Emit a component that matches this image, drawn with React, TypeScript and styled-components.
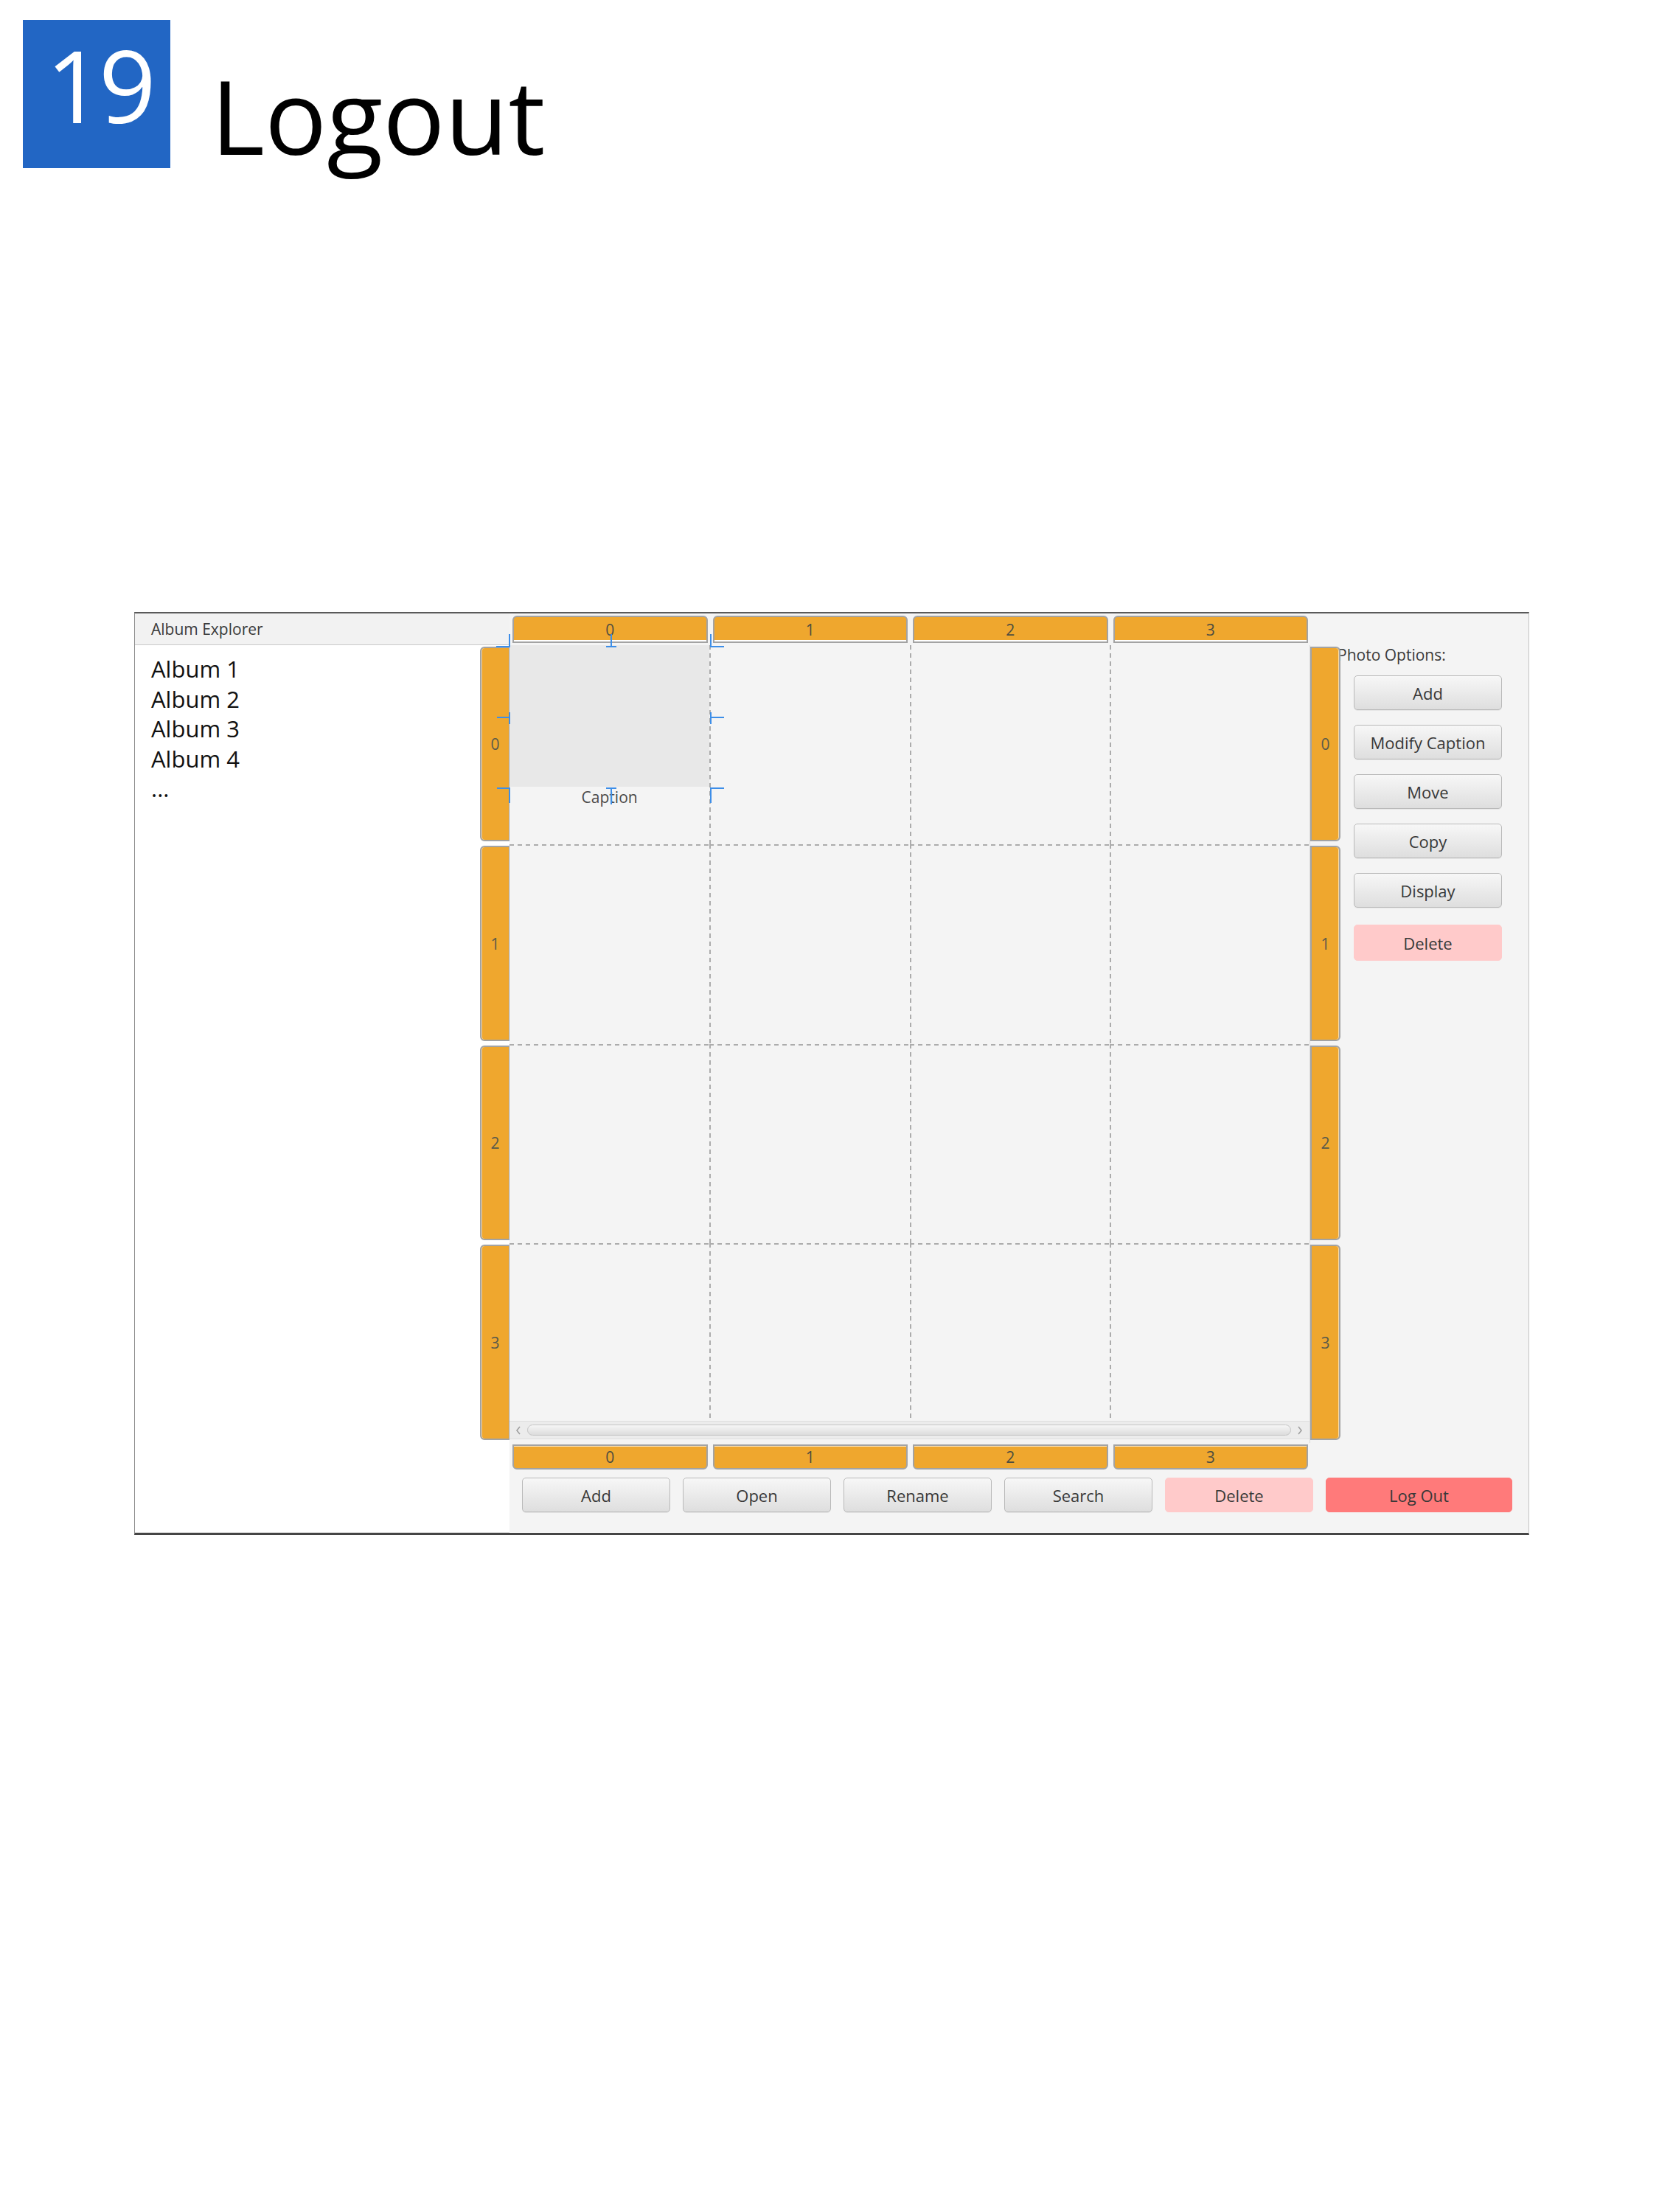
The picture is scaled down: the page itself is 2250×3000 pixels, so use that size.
import React from 'react';
import styled, { createGlobalStyle, css } from 'styled-components';

const GlobalStyle = createGlobalStyle`
  html, body {
    margin: 0;
    padding: 0;
    background: #ffffff;
  }
  body {
    font-family: 'Open Sans', 'Noto Sans', sans-serif;
    color: #000;
  }
  * {
    box-sizing: border-box;
  }
`;

const ORANGE = '#efa72e';
const HEADER_BORDER = '#a3a3a3';

const Page = styled.div`
  width: 2250px;
  height: 3000px;
  background: #fff;
`;

const Header = styled.header`
  display: flex;
  align-items: flex-start;
  padding: 27px 0 0 31px;
`;

const Badge = styled.div`
  width: 200px;
  height: 201px;
  background: #2266c4;
  color: #fff;
  display: flex;
  align-items: center;
  justify-content: center;
  padding: 0 0 26px 6px;
  font-size: 136px;
  line-height: 1;
  letter-spacing: -6px;
`;

const Title = styled.h1`
  margin: 59px 0 0 55px;
  font-size: 140px;
  font-weight: 400;
  line-height: 1;
  letter-spacing: 0;
`;

const Window = styled.div`
  position: relative;
  margin: 602px 0 0 182px;
  width: 1892px;
  height: 1252px;
  border-style: solid;
  border-color: #5a5a5a #c4c4c4 #454545 #8e8e8e;
  border-width: 2px 1px 3px 1px;
  background: #f4f4f4;
  display: grid;
  grid-template-columns: 468px 40px 1086px 41px 1fr;
  grid-template-rows: 43px 1082px 38px 1fr;
`;

const TitleBar = styled.div`
  grid-column: 1 / 3;
  grid-row: 1;
  display: flex;
  align-items: center;
  padding-left: 22px;
  background: #f2f2f2;
  border-bottom: 1px solid #cacaca;
  font-size: 21px;
  color: #3a3a3a;
`;

const ListPane = styled.ul`
  grid-column: 1 / 3;
  grid-row: 2 / 5;
  margin: 0;
  padding: 12px 0 0 22px;
  list-style: none;
  background: #fff;
  border-bottom: 1px solid #d4d4d4;
`;

const ListItem = styled.li`
  font-size: 31px;
  line-height: 40.5px;
  color: #111;
`;

const RowHeaderColumn = styled.div<{ $col: number }>`
  grid-row: 2;
  grid-column: ${({ $col }) => $col};
  z-index: 2;
  display: grid;
  grid-template-rows: 270px 271px 270px 1fr;
`;

const RowHeader = styled.div<{ $side: 'left' | 'right' }>`
  margin: 2px 0 4px;
  display: flex;
  align-items: center;
  justify-content: center;
  background: ${ORANGE};
  border: 2px solid ${HEADER_BORDER};
  font-size: 21px;
  color: #5a5a4a;
  ${({ $side }) =>
    $side === 'left'
      ? css`
          border-radius: 6px 0 0 6px;
          border-right-width: 1px;
          box-shadow: inset 1px 0 0 rgba(255, 255, 255, 0.5);
        `
      : css`
          border-radius: 0 6px 6px 0;
          box-shadow: inset -1px 0 0 rgba(255, 255, 255, 0.6);
        `}
`;

const ColHeaderRow = styled.div<{ $row: number }>`
  grid-row: ${({ $row }) => $row};
  grid-column: 3;
  display: grid;
  grid-template-columns: repeat(4, 1fr);
`;

const ColHeader = styled.div<{ $edge: 'top' | 'bottom' }>`
  display: flex;
  align-items: center;
  justify-content: center;
  background: ${ORANGE};
  border: 2px solid ${HEADER_BORDER};
  font-size: 21px;
  color: #4e4e40;
  ${({ $edge }) =>
    $edge === 'top'
      ? css`
          margin: 3px 3px 3px 4px;
          border-radius: 6px 6px 0 0;
          box-shadow: inset 0 -2px 0 #ffffff;
        `
      : css`
          margin: 2px 3px 2px 4px;
          border-radius: 0 0 6px 6px;
          box-shadow: inset 0 1px 0 rgba(255, 255, 255, 0.7);
        `}
`;

const CellsPane = styled.div`
  grid-row: 2;
  grid-column: 3;
  display: flex;
  flex-direction: column;
  border-right: 1px solid #dadada;
`;

const CellGrid = styled.div`
  flex: 1;
  display: grid;
  grid-template-columns: repeat(4, 1fr);
  grid-template-rows: 270px 271px 270px 1fr;
`;

const DASH = '#acacac';

// dashed grid lines drawn on the leading edges of every cell but the first row / column
const Cell = styled.div<{ $firstCol: boolean; $firstRow: boolean }>`
  display: flex;
  flex-direction: column;
  background-repeat: no-repeat;
  background-image: ${({ $firstCol, $firstRow }) =>
    [
      $firstCol ? 'none' : `repeating-linear-gradient(to bottom, ${DASH} 0 6px, transparent 6px 11px)`,
      $firstRow ? 'none' : `repeating-linear-gradient(to right, ${DASH} 0 6px, transparent 6px 11px)`,
    ].join(', ')};
  background-size: 2px 100%, 100% 2px;
  background-position: left top, left top;
`;

const ImageSlot = styled.div`
  height: 192px;
  background: #e8e8e8;
`;

const Caption = styled.div`
  text-align: center;
  font-size: 21px;
  line-height: 28px;
  color: #4a4a4a;
`;

const ScrollBar = styled.div`
  height: 25px;
  margin-bottom: 5px;
  display: flex;
  align-items: center;
  gap: 8px;
  padding: 0 9px 0 8px;
  background: #ececec;
  border-top: 1px solid #dedede;
  border-bottom: 1px solid #dedede;
`;

const ScrollTrack = styled.div`
  flex: 1;
  height: 15px;
  border-radius: 8px;
  border: 1px solid #c4c4c4;
  background: linear-gradient(#f6f6f6, #dcdcdc);
`;

const Sidebar = styled.div`
  grid-row: 2;
  grid-column: 5;
  z-index: 1;
  display: flex;
  flex-direction: column;
  align-items: flex-start;
`;

const SideLabel = styled.div`
  margin-left: -4px;
  font-size: 21px;
  line-height: 26px;
  color: #3a3a3a;
`;

const SideButtons = styled.div`
  margin: 15px 0 0 18px;
  display: flex;
  flex-direction: column;
  gap: 20px;
`;

type Variant = 'default' | 'danger' | 'logout';

const ActionButton = styled.button<{ $variant?: Variant; $wide?: boolean; $tall?: boolean }>`
  width: ${({ $wide }) => ($wide ? '253px' : '201px')};
  height: ${({ $tall }) => ($tall ? '47px' : '47px')};
  padding: 0;
  font-family: inherit;
  font-size: 22px;
  color: #383838;
  border-radius: 5px;
  cursor: pointer;
  ${({ $variant = 'default' }) =>
    $variant === 'default'
      ? css`
          border: 1px solid #b9b9b9;
          background: linear-gradient(#f7f7f7, #dedede);
          box-shadow: 0 1px 0 rgba(0, 0, 0, 0.06);
        `
      : $variant === 'danger'
      ? css`
          border: 1px solid #ffcaca;
          background: #ffcaca;
        `
      : css`
          border: 1px solid #ff7a7a;
          background: #ff7a7a;
        `}
`;

const SideDelete = styled(ActionButton)`
  margin-top: 3px;
  height: 49px;
`;

const BottomBar = styled.div`
  grid-row: 4;
  grid-column: 3 / 6;
  display: flex;
  align-items: flex-start;
  gap: 17px;
  padding: 9px 0 0 17px;
`;

const Overlay = styled.svg`
  position: absolute;
  left: 0;
  top: 0;
  z-index: 3;
  pointer-events: none;
`;

const Chevron = ({ dir }: { dir: 'left' | 'right' }) => (
  <svg width="8" height="12" viewBox="0 0 8 12">
    <path
      d={dir === 'left' ? 'M6 1 L2 6 L6 11' : 'M2 1 L6 6 L2 11'}
      fill="none"
      stroke="#a0a0a0"
      strokeWidth="1.6"
    />
  </svg>
);

// Scene Builder style selection handles around the image in cell 0,0
const markers = [
  'M490 45 H508 V28',
  'M639 45 H653 M646 45 V28',
  'M799 45 H781 V28',
  'M491 141 H508 M508 134 V150',
  'M799 141 H781 M781 134 V150',
  'M491 237 H508 V257',
  'M639 237 H653 M646 237 V259',
  'M799 237 H781 V257',
];

const indexes = [0, 1, 2, 3];
const photoOptions = ['Add', 'Modify Caption', 'Move', 'Copy', 'Display'];
const albums = ['Album 1', 'Album 2', 'Album 3', 'Album 4', '...'];

export default function App() {
  return (
    <Page>
      <GlobalStyle />
      <Header>
        <Badge>19</Badge>
        <Title>Logout</Title>
      </Header>

      <Window>
        <TitleBar>Album Explorer</TitleBar>
        <ListPane>
          {albums.map((a) => (
            <ListItem key={a}>{a}</ListItem>
          ))}
        </ListPane>

        <ColHeaderRow $row={1}>
          {indexes.map((i) => (
            <ColHeader key={i} $edge="top">
              {i}
            </ColHeader>
          ))}
        </ColHeaderRow>

        <RowHeaderColumn $col={2}>
          {indexes.map((i) => (
            <RowHeader key={i} $side="left">
              {i}
            </RowHeader>
          ))}
        </RowHeaderColumn>

        <CellsPane>
          <CellGrid>
            {indexes.map((r) =>
              indexes.map((c) => (
                <Cell key={`${r}-${c}`} $firstCol={c === 0} $firstRow={r === 0}>
                  {r === 0 && c === 0 && (
                    <>
                      <ImageSlot />
                      <Caption>Caption</Caption>
                    </>
                  )}
                </Cell>
              ))
            )}
          </CellGrid>
          <ScrollBar>
            <Chevron dir="left" />
            <ScrollTrack />
            <Chevron dir="right" />
          </ScrollBar>
        </CellsPane>

        <RowHeaderColumn $col={4}>
          {indexes.map((i) => (
            <RowHeader key={i} $side="right">
              {i}
            </RowHeader>
          ))}
        </RowHeaderColumn>

        <Sidebar>
          <SideLabel>Photo Options:</SideLabel>
          <SideButtons>
            {photoOptions.map((o) => (
              <ActionButton key={o}>{o}</ActionButton>
            ))}
            <SideDelete $variant="danger">Delete</SideDelete>
          </SideButtons>
        </Sidebar>

        <ColHeaderRow $row={3}>
          {indexes.map((i) => (
            <ColHeader key={i} $edge="bottom">
              {i}
            </ColHeader>
          ))}
        </ColHeaderRow>

        <BottomBar>
          <ActionButton $tall>Add</ActionButton>
          <ActionButton $tall>Open</ActionButton>
          <ActionButton $tall>Rename</ActionButton>
          <ActionButton $tall>Search</ActionButton>
          <ActionButton $tall $variant="danger">
            Delete
          </ActionButton>
          <ActionButton $tall $wide $variant="logout">
            Log Out
          </ActionButton>
        </BottomBar>

        <Overlay width="1890" height="300" viewBox="0 0 1890 300">
          {markers.map((d) => (
            <path key={d} d={d} fill="none" stroke="#3d8ee8" strokeWidth="2" />
          ))}
        </Overlay>
      </Window>
    </Page>
  );
}
